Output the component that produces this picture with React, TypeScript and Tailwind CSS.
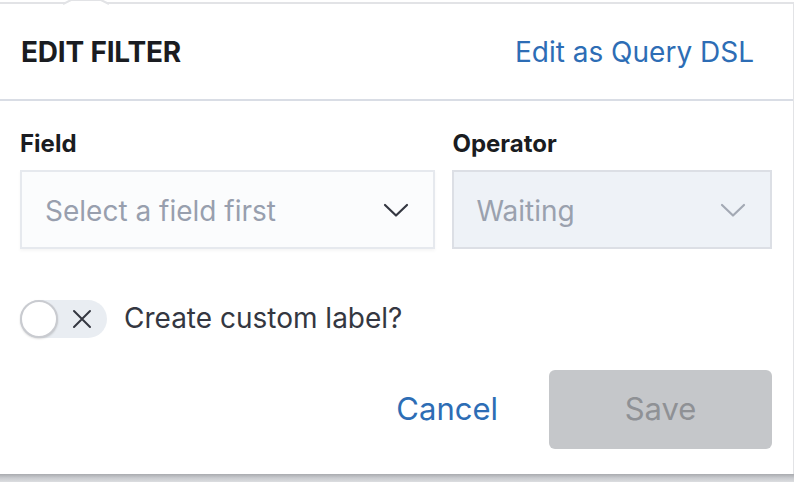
import React from "react";

function Chevron({ color }: { color: string }) {
  return (
    <svg width="26" height="16" viewBox="0 0 26 16" fill="none">
      <path d="M2 3 L13 13.5 L24 3" stroke={color} strokeWidth="2.2" strokeLinecap="round" strokeLinejoin="round" />
    </svg>
  );
}

export default function App() {
  return (
    <div
      className="w-[794px] h-[482px] bg-white flex flex-col overflow-hidden relative"
      style={{ fontFamily: "Inter, 'Noto Sans', sans-serif" }}
    >
      <div className="pt-[2px] h-[474px] flex flex-col">
        <div className="relative h-[472px] border-t-2 border-r border-[#e2e3e6] bg-white flex flex-col">
          {/* arrow notch */}
          <svg className="absolute left-[63px] top-[-4px]" width="48" height="8" viewBox="0 0 48 8">
            <path d="M0 4 L8 0 L38 0 L46 4" fill="white" stroke="#e2e3e6" strokeWidth="2" />
            <rect x="6" y="2" width="34" height="8" fill="white" />
          </svg>
          {/* header */}
          <div className="h-[97px] flex items-center justify-between px-[21px] border-b-2 border-[#d9dde5]">
            <div className="text-[28px] font-bold text-[#1a1c21] tracking-[-0.2px] pt-[1px]">EDIT FILTER</div>
            <div className="text-[28px] text-[#2d6db5] pr-[18px] pt-[1px]">Edit as Query DSL</div>
          </div>
          {/* body */}
          <div className="px-[20px] pt-[25px] flex flex-col">
            <div className="flex gap-[17px] pr-[1px]">
              <div className="flex flex-col w-[416px]">
                <div className="text-[24px] font-bold leading-[36px] text-[#1a1c21]">Field</div>
                <div className="mt-[8px] h-[79px] bg-[#fbfcfd] border-2 border-[#e6e9ee] flex items-center justify-between pl-[23px] pr-[24px] shadow-[0_2px_3px_rgba(0,0,0,0.04)]">
                  <span className="text-[28px] text-[#989fae] pt-[3px]">Select a field first</span>
                  <Chevron color="#343741" />
                </div>
              </div>
              <div className="flex flex-col w-[320px]">
                <div className="text-[24px] font-bold leading-[36px] text-[#1a1c21]">Operator</div>
                <div className="mt-[8px] h-[79px] bg-[#eef2f7] border-2 border-[#dcdfe5] flex items-center justify-between pl-[22px] pr-[24px]">
                  <span className="text-[28px] text-[#9aa1ae] pt-[3px]">Waiting</span>
                  <Chevron color="#a3a9b4" />
                </div>
              </div>
            </div>
            {/* toggle row */}
            <div className="mt-[51px] h-[38px] flex items-center gap-[17px]">
              <div className="relative w-[87px] h-[38px] rounded-full bg-[#e9edf2] flex items-center">
                <div className="absolute left-0 top-0 w-[38px] h-[38px] rounded-full bg-white border-2 border-[#c9cbd0] shadow-[0_1px_2px_rgba(0,0,0,0.15)]" />
                <svg className="absolute left-[52px] top-[9px]" width="20" height="20" viewBox="0 0 20 20">
                  <path d="M2 2 L18 18 M18 2 L2 18" stroke="#343741" strokeWidth="2" strokeLinecap="round" />
                </svg>
              </div>
              <span className="text-[28px] leading-[34px] mb-[2px] text-[#343741]">Create custom label?</span>
            </div>
            {/* buttons */}
            <div className="mt-[32px] flex items-center justify-end pr-[1px]">
              <span className="text-[31px] text-[#2d6db5] mr-[51px]">Cancel</span>
              <div className="w-[223px] h-[79px] rounded-[6px] bg-[#c5c7ca] flex items-center justify-center">
                <span className="text-[31px] text-[#8f9195]">Save</span>
              </div>
            </div>
          </div>
        </div>
      </div>
      <div className="h-[8px] bg-gradient-to-b from-[#a9abaf] via-[#c9cbcf] to-[#dcdde0]" />
    </div>
  );
}
